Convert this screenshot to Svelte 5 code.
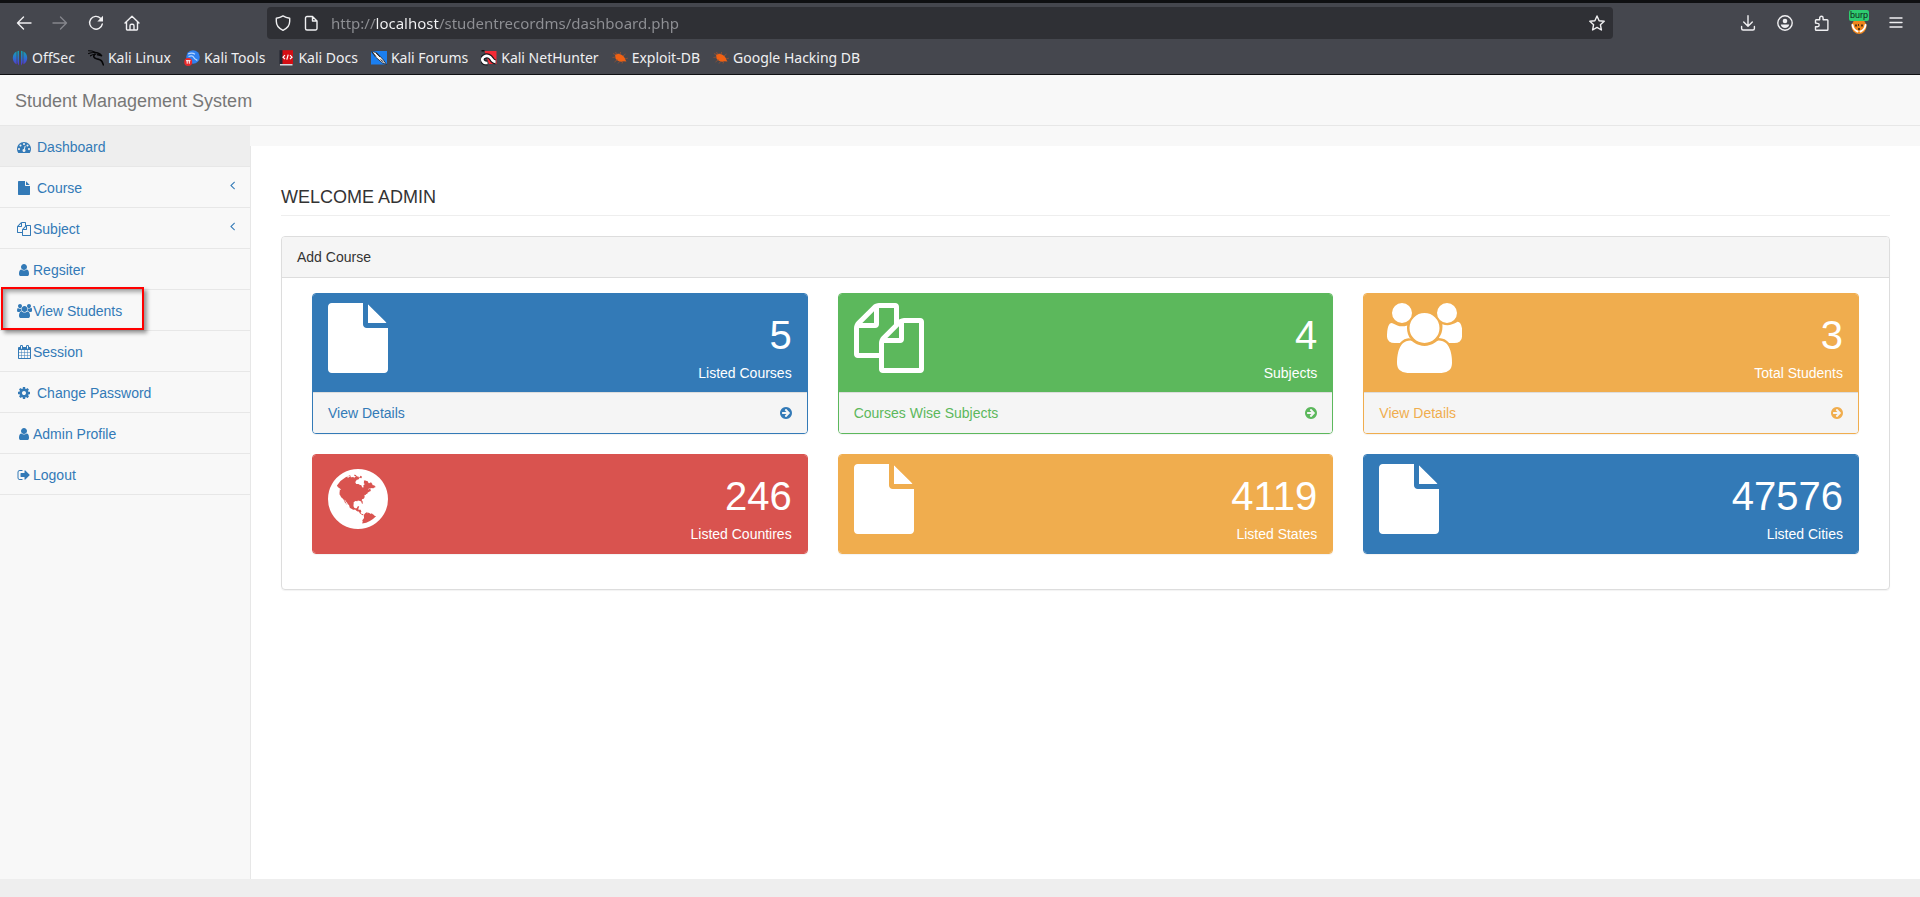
<script>
  const icons = {
    dashboard: { w: 1792, d: 'M384 1152q0-53-37.5-90.5t-90.5-37.5-90.5 37.5-37.5 90.5 37.5 90.5 90.5 37.5 90.5-37.5 37.5-90.5zm192-448q0-53-37.5-90.5t-90.5-37.5-90.5 37.5-37.5 90.5 37.5 90.5 90.5 37.5 90.5-37.5 37.5-90.5zm428 481l101-382q6-26-7.5-48.5t-38.5-29.5-48 6.5-30 39.5l-101 382q-60 5-107 43.5t-63 98.5q-20 77 20 146t117 89 146-20 89-117q16-60-6-117t-72-91zm660-33q0-53-37.5-90.5t-90.5-37.5-90.5 37.5-37.5 90.5 37.5 90.5 90.5 37.5 90.5-37.5 37.5-90.5zm-640-640q0-53-37.5-90.5t-90.5-37.5-90.5 37.5-37.5 90.5 37.5 90.5 90.5 37.5 90.5-37.5 37.5-90.5zm448 192q0-53-37.5-90.5t-90.5-37.5-90.5 37.5-37.5 90.5 37.5 90.5 90.5 37.5 90.5-37.5 37.5-90.5zm320 448q0 261-141 483-19 29-54 29h-1402q-35 0-54-29-141-221-141-483 0-182 71-348t191-286 286-191 348-71 348 71 286 191 191 286 71 348z' },
    file: { x: 128, w: 1536, d: 'M1152 512v-472q22 14 36 28l408 408q14 14 28 36h-472zm-128 32q0 40 28 68t68 28h544v1056q0 40-28 68t-68 28h-1344q-40 0-68-28t-28-68v-1600q0-40 28-68t68-28h800v544z' },
    files: { w: 1792, d: 'M1696 384q40 0 68 28t28 68v1216q0 40-28 68t-68 28h-960q-40 0-68-28t-28-68v-288h-544q-40 0-68-28t-28-68v-672q0-40 20-88t48-76l408-408q28-28 76-48t88-20h416q40 0 68 28t28 68v328q68-40 128-40h416zm-544 213l-299 299h299v-299zm-640-384l-299 299h299v-299zm196 647l316-316v-416h-384v416q0 40-28 68t-68 28h-416v640h512v-256q0-40 20-88t48-76zm956 804v-1152h-384v416q0 40-28 68t-68 28h-416v640h896z' },
    user: { x: 128, w: 1536, d: 'M1536 1399q0 109-62.5 187t-150.5 78h-854q-88 0-150.5-78t-62.5-187q0-85 8.5-160.5t31.5-152 58.5-131 94-89 134.5-34.5q131 128 313 128t313-128q76 0 134.5 34.5t94 89 58.5 131 31.5 152 8.5 160.5zm-256-887q0 159-112.5 271.5t-271.5 112.5-271.5-112.5-112.5-271.5 112.5-271.5 271.5-112.5 271.5 112.5 112.5 271.5z' },
    users: { w: 1920, d: 'M593 896q-162 5-265 128h-134q-82 0-138-40.5t-56-118.5q0-353 124-353 6 0 43.5 21t97.5 42.5 119 21.5q67 0 133-23-5 37-5 66 0 159 93 286zm1071 637q0 120-73 189.5t-194 69.5h-874q-121 0-194-69.5t-73-189.5q0-53 3.5-103.5t14-109 26.5-108.5 43-97.5 62-81 85.5-53.5 111.5-20q10 0 43 21.5t73 48 107 48 135 21.5 135-21.5 107-48 73-48 43-21.5q61 0 111.5 20t85.5 53.5 62 81 43 97.5 26.5 108.5 14 109 3.5 103.5zm-1024-1277q0 106-75 181t-181 75-181-75-75-181 75-181 181-75 181 75 75 181zm704 384q0 159-112.5 271.5t-271.5 112.5-271.5-112.5-112.5-271.5 112.5-271.5 271.5-112.5 271.5 112.5 112.5 271.5zm576 225q0 78-56 118.5t-138 40.5h-134q-103-123-265-128 93-127 93-286 0-29-5-66 66 23 133 23 59 0 119-21.5t97.5-42.5 43.5-21q124 0 124 353zm-128-609q0 106-75 181t-181 75-181-75-75-181 75-181 181-75 181 75 75 181z' },
    calendar: { x: 64, w: 1664, d: 'M192 1664h288v-288h-288v288zm352 0h320v-288h-320v288zm-352-352h288v-320h-288v320zm352 0h320v-320h-320v320zm-352-384h288v-288h-288v288zm736 736h320v-288h-320v288zm-384-736h320v-288h-320v288zm768 736h288v-288h-288v288zm-384-352h320v-320h-320v320zm-352-864v-288q0-13-9.5-22.5t-22.5-9.5h-64q-13 0-22.5 9.5t-9.5 22.5v288q0 13 9.5 22.5t22.5 9.5h64q13 0 22.5-9.5t9.5-22.5zm736 864h288v-320h-288v320zm-384-384h320v-288h-320v288zm384 0h288v-288h-288v288zm32-480v-288q0-13-9.5-22.5t-22.5-9.5h-64q-13 0-22.5 9.5t-9.5 22.5v288q0 13 9.5 22.5t22.5 9.5h64q13 0 22.5-9.5t9.5-22.5zm384-64v1280q0 52-38 90t-90 38h-1408q-52 0-90-38t-38-90v-1280q0-52 38-90t90-38h128v-96q0-66 47-113t113-47h64q66 0 113 47t47 113v96h384v-96q0-66 47-113t113-47h64q66 0 113 47t47 113v96h128q52 0 90 38t38 90z' },
    cog: { x: 128, w: 1536, d: 'M1152 896q0-106-75-181t-181-75-181 75-75 181 75 181 181 75 181-75 75-181zm512-109v222q0 12-8 23t-20 13l-185 28q-19 54-39 91 35 50 107 138 10 12 10 25t-9 23q-27 37-99 108t-94 71q-12 0-26-9l-138-108q-44 23-91 38-16 136-29 186-7 28-36 28h-222q-14 0-24.5-8.5t-11.5-21.5l-28-184q-49-16-90-37l-141 107q-10 9-25 9-14 0-25-11-126-114-165-168-7-10-7-23 0-12 8-23 15-21 51-66.5t54-70.5q-27-50-41-99l-183-27q-13-2-21-12.5t-8-23.5v-222q0-12 8-23t19-13l186-28q14-46 39-92-40-57-107-138-10-12-10-24 0-10 9-23 26-36 98.5-107.5t94.5-71.5q13 0 26 10l138 107q44-23 91-38 16-136 29-186 7-28 36-28h222q14 0 24.5 8.5t11.5 21.5l28 184q49 16 90 37l142-107q9-9 24-9 13 0 25 10 129 119 165 170 7 8 7 22 0 12-8 23-15 21-51 66.5t-54 70.5q26 50 41 98l183 28q13 2 21 12.5t8 23.5z' },
    signout: { x: 0, w: 1792, d: 'M704 1440q0 4 1 20t.5 26.5-3 23.5-10 19.5-20.5 6.5h-320q-119 0-203.5-84.5t-84.5-203.5v-704q0-119 84.5-203.5t203.5-84.5h320q13 0 22.5 9.5t9.5 22.5q0 4 1 20t.5 26.5-3 23.5-10 19.5-20.5 6.5h-320q-66 0-113 47t-47 113v704q0 66 47 113t113 47h312l11.5 1 11.5 3 8 5.5 7 9 2 13.5zm928-544q0 26-19 45l-544 544q-19 19-45 19t-45-19-19-45v-288h-448q-26 0-45-19t-19-45v-384q0-26 19-45t45-19h448v-288q0-26 19-45t45-19 45 19l544 544q19 19 19 45z' },
    angle: { x: 576, w: 640, d: 'M1203 544q0 13-10 23l-393 393 393 393q10 10 10 23t-10 23l-50 50q-10 10-23 10t-23-10l-466-466q-10-10-10-23t10-23l466-466q10-10 23-10t23 10l50 50q10 10 10 23z' },
    arrow: { x: 128, w: 1536, d: 'M1413 896q0-27-18-45l-362-362-91-91q-18-18-45-18t-45 18l-91 91q-18 18-18 45t18 45l189 189h-502q-26 0-45 19t-19 45v128q0 26 19 45t45 19h502l-189 189q-18 18-18 45t18 45l91 91q18 18 45 18t45-18l91-91 362-362q18-18 18-45zm251 0q0 209-103 385.5t-279.5 279.5-385.5 103-385.5-103-279.5-279.5-103-385.5 103-385.5 279.5-279.5 385.5-103 385.5 103 279.5 279.5 103 385.5z' },
    globe: { x: 128, w: 1536, d: 'M896 128q209 0 385.5 103t279.5 279.5 103 385.5-103 385.5-279.5 279.5-385.5 103-385.5-103-279.5-279.5-103-385.5 103-385.5 279.5-279.5 385.5-103zm274 521q-2 1-9.5 9.5t-13.5 9.5q2 0 4.5-5t5-11 3.5-7q6-7 22-15 14-6 52-12 34-8 51 11-2-2 9.5-13t14.5-12q3-2 15-4.5t15-7.5l2-22q-12 1-17.5-7t-6.5-21q0 2-6 8 0-7-4.5-8t-11.5 1-9 1q-10-3-15-7.5t-8-16.5-4-15q-2-5-9.5-11t-9.5-10q-1-2-2.5-5.5t-3-6.5-4-5.5-5.5-2.5-7 5-7.5 10-4.5 5q-3-2-6-1.5t-4.5 1-4.5 3-5 3.5q-3 2-8.5 3t-8.5 2q15-5-1-11-10-4-16-3 9-4 7.5-12t-8.5-14h5q-1-4-8.5-8.5t-17.5-8.5-13-6q-8-5-34-9.5t-33-.5q-5 6-4.5 10.5t4 14 3.5 12.5q1 6-5.5 13t-6.5 12q0 7 14 15.5t10 21.5q-3 8-16 16t-16 12q-5 8-1.5 18.5t10.5 16.5q2 2 1.5 4t-3.5 4.5-5.5 4-6.5 3.5l-3 2q-11 5-20.5-6t-13.5-26q-7-25-16-30-23-8-29 1-5-13-41-26-25-9-58-4 6-1 0-15-7-15-19-12 3-6 4-17.5t1-13.5q3-13 12-23 1-1 7-8.5t9.5-13.5.5-6q35 4 50-11 5-5 11.5-17t10.5-17q9-6 14-5.5t14.5 5.5 14.5 5q14 1 15.5-11t-7.5-20q12 1 3-17-4-7-8-9-12-4-27 5-8 4 2 8-1-1-9.5 10.5t-16.5 17.5-16-5q-1-1-5.5-13.5t-9.5-13.5q-8 0-16 15 3-8-11-15t-24-8q19-12-8-27-7-4-20.5-5t-19.5 4q-5 7-5.5 11.5t5 8 10.5 5.5 11.5 4 8.5 3q14 10 8 14-2 1-8.5 3.5t-11.5 4.5-6 4q-3 4 0 14t-2 14q-5-5-9-17.5t-7-16.5q7 9-25 6l-10-1q-4 0-16 2t-20.5 1-13.5-8q-4-8 0-20 1-4 4-2-4-3-11-9.5t-10-8.5q-46 15-94 41 6 1 12-1 5-2 13-6.5t10-5.5q34-14 42-7l5-5q14 16 20 25-7-4-30-1-20 6-22 12 7 12 5 18-4-3-11.5-10t-14.5-11-15-5q-16 0-22 1-146 80-235 222 7 7 12 8 4 1 5 9t2.5 11 11.5-3q9 8 3 19 1-1 44 27 19 17 21 21 3 11-10 18-1-2-9-9t-9-4q-3 5 .5 18.5t10.5 12.5q-7 0-9.5 16t-2.5 35.5-1 23.5l2 1q-3 12 5.5 34.5t21.5 19.5q-13 3 20 43 6 8 8 9 3 2 12 7.5t15 10 10 10.5q4 5 10 22.5t14 23.5q-2 6 9.5 20t10.5 23q-1 0-2.5 1t-2.5 1q3 7 15.5 14t15.5 13q1 3 2 10t3 11 8 2q2-20-24-62-15-25-17-29-3-5-5.5-15.5t-4.5-14.5q2 0 6 1.5t8.5 3.5 7.5 4 2 3q-3 7 2 17.5t12 18.5 17 19 12 13q6 6 14 19.5t0 13.5q9 0 20 10t17 20q5 8 8 26t5 24q2 7 8.5 13.5t12.5 9.5l16 8 13 7q5 2 18.5 10.5t21.5 11.5q10 4 16 4t14.5-2.5 13.5-3.5q15-2 29 15t21 21q36 19 55 11-2 1 .5 7.5t8 15.5 9 14.5 5.5 8.5q5 6 18 15t18 15q6-4 7-9-3 8 7 20t18 10q14-3 14-32-31 15-49-18 0-1-2.5-5.5t-4-8.5-2.5-8.5 0-7.5 5-3q9 0 10-3.5t-2-12.5-4-13q-1-8-11-20t-12-15q-5 9-16 8t-16-9q0 1-1.5 5.5t-1.5 6.5q-13 0-15-1 1-3 2.5-17.5t3.5-22.5q1-4 5.5-12t7.5-14.5 4-12.5-4.5-9.5-17.5-2.5q-19 1-26 20-1 3-3 10.5t-5 11.5-9 7q-7 3-24 2t-24-5q-13-8-22.5-29t-9.5-37q0-10 2.5-26.5t3-25-5.5-24.5q3-2 9-9.5t10-10.5q2-1 4.5-1.5t4.5 0 4-1.5 3-6q-1-1-4-3-3-3-4-3 7 3 28.5-1.5t27.5 1.5q15 11 22-2 0-1-2.5-9.5t-.5-13.5q5 27 29 9 3 3 15.5 5t17.5 5q3 2 7 5.5t5.5 4.5 5-.5 8.5-6.5q10 14 12 24 11 40 19 44 7 3 11 2t4.5-9.5 0-14-1.5-12.5l-1-8v-18l-1-8q-15-3-18.5-12t1.5-18.5 15-18.5q1-1 8-3.5t15.5-6.5 12.5-8q21-19 15-35 7 0 11-9-1 0-5-3t-7.5-5-4.5-2q9-5 2-16 5-3 7.5-11t7.5-10q9 12 21 2 8-8 1-16 5-7 20.5-10.5t18.5-9.5q7 2 8-2t1-12 3-12q4-5 15-9t13-5l17-11q3-4 0-4 18 2 31-11 10-11-6-20 3-6-3-9.5t-15-5.5q3-1 11.5-.5t10.5-1.5q15-10-7-16-17-5-43 12zm-163 877q206-36 351-189-3-3-12.5-4.5t-12.5-3.5q-18-7-24-8 1-7-2.5-13t-8-9-12.5-8-11-7q-2-2-7-6t-7-5.5-7.5-4.5-8.5-2-10 1l-3 1q-3 1-5.5 2.5t-5.5 3-4 3 0 2.500q-21-17-36-22-5-1-11-5.500t-10.500-7-10-1.500-11.500 7q-5 5-6 15t-2 13q-7-5 0-17.500t2-18.500q-3-6-10.500-4.500t-12 4.500-11.500 8.500-9 6.500-8.500 5.500-8.500 7.500q-3 4-6 12t-5 11q-2-4-11.500-6.500t-9.500-5.500q2 10 4 35t5 38q7 31-12 48-27 25-29 40-4 22 12 26 0 7-8 20.500t-7 21.500q0 6 2 16z' }
  };

  const menu = [
    { label: 'Dashboard', icon: 'dashboard', spaced: true, active: true },
    { label: 'Course', icon: 'file', spaced: true, sub: true },
    { label: 'Subject', icon: 'files', sub: true },
    { label: 'Regsiter', icon: 'user' },
    { label: 'View Students', icon: 'users', marked: true },
    { label: 'Session', icon: 'calendar' },
    { label: 'Change Password', icon: 'cog', spaced: true },
    { label: 'Admin Profile', icon: 'user' },
    { label: 'Logout', icon: 'signout' }
  ];

  const cards = [
    { tone: 'blue', icon: 'file', value: '5', label: 'Listed Courses', link: 'View Details' },
    { tone: 'green', icon: 'files', value: '4', label: 'Subjects', link: 'Courses Wise Subjects' },
    { tone: 'yellow', icon: 'users', value: '3', label: 'Total Students', link: 'View Details' },
    { tone: 'red', icon: 'globe', value: '246', label: 'Listed Countires' },
    { tone: 'yellow', icon: 'file', value: '4119', label: 'Listed States' },
    { tone: 'blue', icon: 'file', value: '47576', label: 'Listed Cities' }
  ];

  const bookmarks = ['OffSec', 'Kali Linux', 'Kali Tools', 'Kali Docs', 'Kali Forums', 'Kali NetHunter', 'Exploit-DB', 'Google Hacking DB'];

  let address = $state('http://localhost/studentrecordms/dashboard.php');
</script>

{#snippet glyph(name, cls)}
  <svg class={cls} viewBox="{icons[name].x ?? 0} 0 {icons[name].w} 1792" aria-hidden="true"><path d={icons[name].d} fill="currentColor" /></svg>
{/snippet}

{#snippet favicon(name)}
  <svg class="favicon" viewBox="0 0 16 16" aria-hidden="true">
    {#if name === 'OffSec'}
      <defs><linearGradient id="off" x1="0" y1="0" x2="0" y2="1"><stop offset="0" stop-color="#12a5ad" /><stop offset=".5" stop-color="#2d6fd2" /><stop offset="1" stop-color="#5a2fd0" /></linearGradient></defs>
      <path fill="url(#off)" d="M4.6 1.6v12.6C2.200 13.200.8 11 .8 8s1.400-5.300 3.800-6.400zM5.400 1.200 7 .8v14.800c-.9-1-1.400-2-1.600-3zM9 .8l1.600.4v11.400c-.2 1-.7 2-1.600 3zM11.400 1.600C13.800 2.700 15.200 5 15.200 8s-1.400 5.200-3.800 6.200z" />
    {:else if name === 'Kali Linux'}
      <g fill="none" stroke="#050506" stroke-linecap="round">
        <path stroke-width="1.100" d="M.5.8c2.500 0 4.500.4 6.500 1.400M.6 3.600C3 2.600 5 2.400 7.200 2.600M2.500 5.800c1.500-1.200 3-1.600 5-1.600" />
        <path stroke-width="1.600" d="M6.500 2.500c3.500.2 5.500 1 7 3.200M6.500 4.500C5 6.600 6 8.200 8.500 8.700c3 .5 4.600 1 5.400 2.600.5 1 .8 2 1.400 3.500M9.500 4.800c1.500 0 2.500.6 4 .9" />
      </g>
    {:else if name === 'Kali Tools'}
      <circle cx="9" cy="7" r="6.800" fill="#2f7fee" />
      <path d="M4 4c3-1.500 5-1.200 7 .2M4.500 6.500C7 5.500 9 5.600 9.800 7.500s2.500 1.800 3.500 3" fill="none" stroke="#b9d8ff" stroke-width="1.200" />
      <circle cx="4.200" cy="12" r="4" fill="#e8282b" />
      <path d="M2 10.700h4.500M3.200 10.700v3M5.300 10.700v3" stroke="#fff" fill="none" />
    {:else if name === 'Kali Docs'}
      <path d="M2 13h12.500v2.500H2z" fill="#d9d9de" />
      <path d="M4 .2h11v13.800H4z" fill="#d40e14" /><path d="M1.500.2H4.500v13.800H1.500z" fill="#22242e" />
      <path d="m7 5.200-2 2 2 2M12 5.200l2 2-2 2M10.200 4.700l-1.400 5" fill="none" stroke="#fff" stroke-width="1.200" />
    {:else if name === 'Kali Forums'}
      <path d="M0 1h16v13.500H0z" fill="#1b7ff0" />
      <path d="m.5 1.500 5 1 7 7.500 3 4.500-4-1.500L4.500 7z" fill="#f3f3f3" stroke="#1a1c22" stroke-width=".8" />
      <path d="m5 3 4 4M9.500 9.500l3 2.500M1 2l4 4.500" stroke="#1a1c22" stroke-width=".9" />
    {:else if name === 'Kali NetHunter'}
      <path d="M3.500 1H15.500v13H8z" fill="#f42b35" /><path d="M.5 0h3v1.500h-3z" fill="#111" />
      <path d="M6.500 13C1.500 13.500-.2 9 3 6.800c3.300-2.100 6.200-.2 7.600 2.100.8 1.600 2 2.800 4 3" fill="none" stroke="#17181c" stroke-width="5" />
      <path d="M6.500 13C1.500 13.500-.2 9 3 6.800c3.300-2.100 6.200-.2 7.600 2.100.8 1.600 2 2.800 4 3" fill="none" stroke="#fff" stroke-width="2.600" />
    {:else}
      <path d="M3 5c2-2 5-1.500 7.500.5 1.500 1 2.500 2.500 3 4.500l1 1.500-3-.2C8.500 12.300 5 11 3.500 8.500z" fill="#f06113" />
      <path d="M1 3.500 4 5M.5 7.500l3-.5M2.500 12l3-2.500M6 13.500l2-2.500M10 13.500l1-2.500M8 4.500l.6-2.500M11 6l2.500-2M13 9l2.800-.8M3.500 2l1.500 3" stroke="#9a5231" stroke-width=".8" />
    {/if}
  </svg>
{/snippet}

<div class="window">
  <header class="chrome">
    <div class="toolbar">
      <div class="group">
        <button class="tool" aria-label="Back"><svg viewBox="0 0 16 16"><path d="M15 8H1.500M7.500 2 1.500 8l6 6" /></svg></button>
        <button class="tool dim" aria-label="Forward"><svg viewBox="0 0 16 16"><path d="M1 8h13.500M8.500 2l6 6-6 6" /></svg></button>
        <button class="tool" aria-label="Reload"><svg viewBox="0 0 16 16"><path d="M12.500 3.200A6.400 6.400 0 1 0 14.300 9" /><path class="solid" d="M15 .8v5.700H9.300z" /></svg></button>
        <button class="tool" aria-label="Home"><svg viewBox="0 0 16 16"><path d="M1 8 8 1.300 15 8M2.500 7v7.300c0 .4.300.7.7.7h9.600c.4 0 .7-.3.7-.7V7M6 15v-4.300c0-.9.6-1.500 1.500-1.500h1c.9 0 1.500.6 1.500 1.500V15" /></svg></button>
      </div>
      <div class="urlbar">
        <svg viewBox="0 0 16 16" aria-hidden="true"><path d="M8 .9c2 1.300 4.200 2 6.700 2.300v3C14.700 10.500 12 13.500 8 15.300 4 13.500 1.300 10.500 1.300 6.200v-3C3.800 2.900 6 2.200 8 .9z" /></svg>
        <svg viewBox="0 0 16 16" aria-hidden="true"><path d="M9.500 1.500H4A1.500 1.500 0 0 0 2.500 3v10.500A1.500 1.500 0 0 0 4 15h8.500a1.500 1.500 0 0 0 1.500-1.500V6zM9.500 1.500V6H14" /></svg>
        <input class="address" type="text" aria-label="Address" bind:value={address} />
        <button class="star" aria-label="Bookmark this page"><svg viewBox="0 0 16 16"><path d="m8 1 2.100 4.700 5.100.6-3.800 3.400 1 5.300L8 12.400 3.600 15l1-5.300L.8 6.300l5.100-.6z" /></svg></button>
      </div>
      <div class="group">
        <button class="tool" aria-label="Downloads"><svg viewBox="0 0 16 16"><path d="M8 .8V11M3.700 7 8 11.300 12.300 7M1.600 11.500v2c0 .9.600 1.500 1.500 1.500h9.800c.9 0 1.500-.6 1.500-1.500v-2" /></svg></button>
        <button class="tool" aria-label="Account"><svg viewBox="0 0 16 16"><circle cx="8" cy="8" r="7.200" /><circle class="solid" cx="8" cy="6" r="2.300" /><path class="solid" d="M3.800 9.500h8.400c-.2 2-2 3.500-4.200 3.500S4 11.500 3.800 9.500z" /></svg></button>
        <button class="tool" aria-label="Extensions"><svg viewBox="0 0 16 16"><path d="M1.500 8V5.500c0-.5.3-.8.8-.8h3.400V3a1.700 1.700 0 0 1 3.400 0v1.700h4c.5 0 .8.300.8.800v9c0 .5-.3.800-.8.800H2.300c-.5 0-.8-.3-.8-.8v-2.700h2a1.700 1.700 0 0 0 0-3.400z" /></svg></button>
        <button class="tool burp" aria-label="Proxy">
          <svg viewBox="0 0 16 16"><circle class="solid" style:fill="#f0861c" cx="8" cy="7.500" r="7.500" /><path d="M1.500 6c.5 4 2.500 5.500 5 6.500M14.500 6c-.5 4-2.500 5.500-5 6.500" stroke="#fff" stroke-width="2" /><path class="solid" style:fill="#5a3513" d="M4 5.500h2v2H4zM10 5.500h2v2h-2zM7 9h2v2H7zM7 5h1v2H7z" /></svg>
          <span class="badge">burp</span>
        </button>
        <button class="tool" aria-label="Menu"><svg viewBox="0 0 16 16"><path d="M2 3h12M2 7.500h12M2 12h12" /></svg></button>
      </div>
    </div>
    <nav class="bookmarks" aria-label="Bookmarks">
      {#each bookmarks as name}
        <a href="#{name}">{@render favicon(name)}{name}</a>
      {/each}
    </nav>
  </header>

  <div class="navbar"><a href="#home">Student Management System</a></div>

  <div class="layout">
    <nav class="sidebar" aria-label="Main">
      <ul>
        {#each menu as item}
          <li class:marked={item.marked}>
            <a href="#{item.label}" class:active={item.active} class:spaced={item.spaced}>
              <span class="fw">{@render glyph(item.icon, 'fa')}</span>
              <span>{item.label}</span>
              {#if item.sub}{@render glyph('angle', 'fa caret')}{/if}
            </a>
          </li>
        {/each}
      </ul>
    </nav>

    <main>
      <h1>WELCOME ADMIN</h1>
      <section class="panel">
        <h2>Add Course</h2>
        <div class="cards">
          {#each cards as card}
            <article class="card {card.tone}">
              <div class="summary">
                {@render glyph(card.icon, 'big ' + card.icon)}
                <div class="figures">
                  <div class="value">{card.value}</div>
                  <div>{card.label}</div>
                </div>
              </div>
              {#if card.link}
                <a class="details" href="#{card.label}"><span>{card.link}</span>{@render glyph('arrow', 'fa')}</a>
              {/if}
            </article>
          {/each}
        </div>
      </section>
    </main>
  </div>
  <footer></footer>
</div>

<style>
  :global(body) { margin: 0; background: #f8f8f8; }
  .window {
    min-height: 100vh;
    display: flex;
    flex-direction: column;
    font: 14px/20px "Liberation Sans", Arial, sans-serif;
    color: #333;
  }
  a { text-decoration: none; color: #337ab7; }
  button { border: 0; padding: 0; background: none; font: inherit; color: inherit; }

  .chrome {
    background: #45474e;
    border-top: 3px solid #0f1012;
    border-bottom: 1px solid #0f1012;
    color: #f0f0f2;
    font: 14px/20px "Noto Sans", sans-serif;
  }
  .toolbar { display: flex; align-items: center; justify-content: space-between; padding: 4px 6px; }
  .group { display: flex; }
  .tool { width: 36px; height: 32px; display: flex; align-items: center; justify-content: center; position: relative; }
  .group:last-child .tool { width: 37px; }
  .toolbar svg { width: 16px; height: 16px; flex: none; fill: none; stroke: #f0f0f2; stroke-width: 1.4; stroke-linejoin: round; stroke-linecap: round; }
  .toolbar .solid { fill: #f0f0f2; stroke: none; }
  .toolbar .dim svg { stroke: #85868c; }
  .urlbar {
    flex: 1;
    margin: 0 116px 0 117px;
    height: 32px;
    box-sizing: border-box;
    padding: 0 8px;
    display: flex;
    align-items: center;
    gap: 12px;
    background: #2f3035;
    border-radius: 4px;
  }
  .address {
    flex: 1;
    min-width: 0;
    height: 24px;
    border: 0;
    padding: 0;
    outline: none;
    font: inherit;
    font-size: 15px;
    color: transparent;
    background: linear-gradient(90deg, #8f9095 44px, #f5f5f7 44px, #f5f5f7 108px, #8f9095 108px);
    background-clip: text;
    -webkit-background-clip: text;
  }
  .star { display: flex; }
  .badge {
    position: absolute;
    left: 9px;
    top: 3px;
    min-width: 20px;
    height: 11px;
    box-sizing: border-box;
    padding-left: 1px;
    background: #2ecc71;
    border-radius: 2px;
    color: #10261a;
    font: 9px/11px "Liberation Sans", sans-serif;
    text-align: left;
  }
  .toolbar .burp svg { margin-top: 8px; }
  .bookmarks { display: flex; gap: 13px; padding: 3px 12px 4px; height: 24px; align-items: center; }
  .bookmarks a { display: flex; align-items: center; gap: 4px; color: inherit; white-space: nowrap; }
  .favicon { width: 16px; height: 16px; }

  .navbar { padding: 16px 15px 14px; background: #f8f8f8; border-bottom: 1px solid #e7e7e7; font-size: 18px; }
  .navbar a { color: #777; }

  .layout { flex: 1; display: flex; }
  .sidebar { width: 250px; flex: none; }
  ul { list-style: none; margin: 0; padding: 0; }
  li { border-bottom: 1px solid #e7e7e7; position: relative; }
  li a { display: flex; align-items: center; padding: 11px 15px 9px; }
  li a.active { background: #eee; }
  li a.spaced .fw { margin-right: 4px; }
  .fw { width: 18px; display: flex; justify-content: center; }
  .fa { height: 14px; width: auto; display: block; }
  li :global(.caret) { margin-left: auto; align-self: flex-start; }
  .marked::after {
    content: "";
    position: absolute;
    inset: -3px 106px 0 1px;
    border: 2px solid #f00;
    box-shadow: 3px 3px 4px rgba(0, 0, 0, .4), inset 3px 3px 4px rgba(0, 0, 0, .35);
    pointer-events: none;
  }

  main { flex: 1; min-width: 0; margin-top: 20px; padding: 0 30px; background: #fff; border-left: 1px solid #e7e7e7; }
  h1 { margin: 41px 0 20px; padding-bottom: 8px; border-bottom: 1px solid #eee; font-size: 18px; line-height: 20px; font-weight: 400; }
  .panel { border: 1px solid #ddd; border-radius: 4px; box-shadow: 0 1px 1px rgba(0, 0, 0, .05); }
  h2 { margin: 0; padding: 10px 15px; font-size: 14px; line-height: 20px; font-weight: 400; background: #f5f5f5; border-bottom: 1px solid #ddd; border-radius: 3px 3px 0 0; }
  .cards { display: grid; grid-template-columns: repeat(3, minmax(0, 1fr)); gap: 20px 30px; padding: 15px 30px 35px; }
  .card { --tone: #337ab7; border: 1px solid var(--tone); border-radius: 4px; overflow: hidden; box-shadow: 0 1px 1px rgba(0, 0, 0, .05); }
  .green { --tone: #5cb85c; }
  .yellow { --tone: #f0ad4e; }
  .red { --tone: #d9534f; }
  .summary { display: flex; justify-content: space-between; height: 79px; padding: 9px 15px 10px; background: var(--tone); color: #fff; }
  .big { height: 70px; width: auto; display: block; }
  .users.big { margin-left: 8px; }
  .figures { text-align: right; padding-top: 4px; }
  .value { font-size: 40px; line-height: 56px; }
  .details { display: flex; align-items: center; justify-content: space-between; padding: 10px 15px; background: #f5f5f5; border-top: 1px solid #ddd; color: var(--tone); }

  footer { height: 18px; background: #eee; }
</style>
